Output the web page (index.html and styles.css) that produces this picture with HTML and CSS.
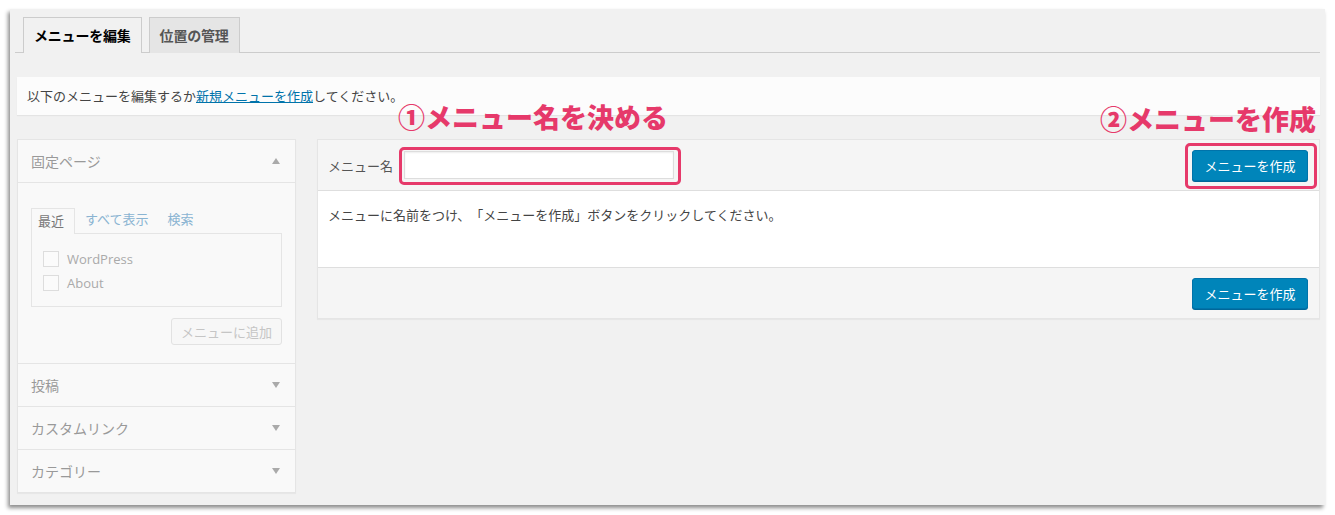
FILE: index.html
```html
<!DOCTYPE html>
<html lang="ja">
<head>
<meta charset="utf-8">
<title>メニュー</title>
<link rel="stylesheet" href="styles.css">
</head>
<body>
<div class="frame">
  <div class="tabs">
    <div class="tab active">メニューを編集</div>
    <div class="tab">位置の管理</div>
  </div>
  <div class="notice">以下のメニューを編集するか<a href="#">新規メニューを作成</a>してください。</div>
  <div class="columns">
    <div class="side">
      <div class="acc-head open"><span>固定ページ</span><span class="arrow up"></span></div>
      <div class="acc-body">
        <div class="mini-tabs">
          <span class="mtab active">最近</span>
          <span class="mtab link">すべて表示</span>
          <span class="mtab link second">検索</span>
        </div>
        <div class="mini-box">
          <label class="chk"><span class="box"></span>WordPress</label>
          <label class="chk"><span class="box"></span>About</label>
        </div>
        <div class="add-row"><span class="add-btn">メニューに追加</span></div>
      </div>
      <div class="acc-head"><span>投稿</span><span class="arrow"></span></div>
      <div class="acc-head"><span>カスタムリンク</span><span class="arrow"></span></div>
      <div class="acc-head last"><span>カテゴリー</span><span class="arrow"></span></div>
    </div>
    <div class="main">
      <div class="main-head">
        <span class="label">メニュー名</span>
        <span class="input"></span>
        <span class="btn">メニューを作成</span>
      </div>
      <div class="main-body">メニューに名前をつけ、「メニューを作成」ボタンをクリックしてください。</div>
      <div class="main-foot"><span class="btn">メニューを作成</span></div>
    </div>
  </div>
  <div class="note note1">①メニュー名を決める</div>
  <div class="note note2">②メニューを作成</div>
  <div class="mark mark1"></div>
  <div class="mark mark2"></div>
</div>
</body>
</html>
```
FILE: styles.css
```css
html, body {
  margin: 0;
  padding: 0;
  background: #fff;
}
body {
  font-family: "Noto Sans CJK JP", "Open Sans", sans-serif;
  font-size: 13px;
  color: #444;
  height: 515px;
  text-spacing-trim: space-all;
}
.frame {
  position: relative;
  margin: 9px 0 0 10px;
  width: 1315px;
  height: 496px;
  box-sizing: border-box;
  padding: 8px 5px 0 5px;
  background: #f1f1f1;
  box-shadow: -2px 3px 4px rgba(0,0,0,0.45);
}
.tabs {
  display: flex;
  gap: 7px;
  height: 35px;
  padding-left: 8px;
  border-bottom: 1px solid #ccc;
}
.tab {
  box-sizing: border-box;
  height: 36px;
  padding: 0 10px;
  border: 1px solid #ccc;
  border-bottom: none;
  background: #e5e5e5;
  color: #555;
  font-weight: 700;
  font-size: 14px;
  line-height: 34px;
  letter-spacing: -0.2px;
}
.tab.active {
  background: #f1f1f1;
  color: #000;
  position: relative;
  z-index: 1;
}
.notice {
  margin: 24px 0 0 2px;
  height: 38px;
  box-sizing: border-box;
  padding: 0 10px;
  background: #fcfcfc;
  box-shadow: 0 1px 1px rgba(0,0,0,0.05);
  line-height: 38px;
  font-size: 13px;
  color: #444;
}
.notice a {
  color: #0073aa;
  text-decoration: underline;
}
.columns {
  display: flex;
  gap: 21px;
  margin: 24px 0 0 2px;
  align-items: flex-start;
}
.side {
  width: 279px;
  box-sizing: border-box;
  border: 1px solid #e5e5e5;
  background: #f9f9f9;
  box-shadow: 0 1px 1px rgba(0,0,0,0.04);
}
.acc-head {
  display: flex;
  justify-content: space-between;
  align-items: center;
  height: 42px;
  padding: 0 13px 0 13px;
  border-bottom: 1px solid #e5e5e5;
  color: #999;
  font-size: 14px;
}
.acc-head.last {
  border-bottom: none;
}
.arrow {
  width: 0;
  height: 0;
  border-left: 4px solid transparent;
  border-right: 4px solid transparent;
  border-top: 6px solid #aaa;
  margin-right: 2px;
}
.arrow.up {
  border-top: none;
  border-bottom: 6px solid #aaa;
}
.acc-body {
  padding: 24px 13px 18px 13px;
  border-bottom: 1px solid #e5e5e5;
}
.mini-tabs {
  display: flex;
  height: 26px;
  align-items: stretch;
}
.mtab {
  font-size: 13px;
  line-height: 24px;
}
.mtab.active {
  box-sizing: border-box;
  width: 44px;
  padding-left: 6px;
  border: 1px solid #e5e5e5;
  border-bottom: none;
  background: #f9f9f9;
  color: #777;
  position: relative;
  top: 1px;
  height: 26px;
}
.mtab.link {
  color: #8ab4d2;
  margin-left: 10px;
}
.mtab.link.second {
  margin-left: 19px;
}
.mini-box {
  height: 74px;
  box-sizing: border-box;
  border: 1px solid #e5e5e5;
  padding: 13px 0 0 11px;
}
.chk {
  display: flex;
  align-items: center;
  height: 24px;
  color: #aaa;
  font-family: "Open Sans", "Noto Sans CJK JP", sans-serif;
  font-size: 13px;
}
.box {
  width: 14px;
  height: 14px;
  border: 1px solid #ddd;
  background: #fbfbfb;
  margin-right: 8px;
}
.add-row {
  display: flex;
  justify-content: flex-end;
  margin-top: 11px;
}
.add-btn {
  box-sizing: border-box;
  width: 111px;
  height: 27px;
  border: 1px solid #e2e2e2;
  border-radius: 3px;
  background: #f7f7f7;
  color: #c5c5c5;
  text-align: center;
  line-height: 25px;
  font-size: 13px;
}
.main {
  flex: 1;
  box-sizing: border-box;
  border: 1px solid #e5e5e5;
  background: #fff;
  box-shadow: 0 1px 1px rgba(0,0,0,0.04);
}
.main-head {
  display: flex;
  align-items: center;
  height: 50px;
  padding: 0 11px 0 10px;
  background: #f5f5f5;
  border-bottom: 1px solid #dedede;
}
.label {
  color: #555;
  font-size: 13px;
  margin-right: 11px;
}
.input {
  box-sizing: border-box;
  width: 270px;
  height: 28px;
  border: 1px solid #ddd;
  background: #fff;
  box-shadow: inset 0 1px 2px rgba(0,0,0,0.07);
}
.btn {
  margin-left: auto;
  box-sizing: border-box;
  width: 116px;
  height: 31px;
  border: 1px solid #0073aa;
  border-radius: 3px;
  background: #0085ba;
  box-shadow: 0 1px 0 #006799;
  color: #fff;
  text-align: center;
  line-height: 29px;
  font-size: 13px;
}
.main-body {
  height: 76px;
  padding: 13px 10px 0 10px;
  box-sizing: border-box;
  color: #444;
  font-size: 13px;
  line-height: 22px;
}
.main-foot {
  display: flex;
  align-items: center;
  height: 50px;
  padding: 0 11px 0 10px;
  background: #f5f5f5;
  border-top: 1px solid #dedede;
}
.note {
  position: absolute;
  color: #e6396a;
  font-weight: 900;
  font-size: 27px;
  line-height: 36px;
  white-space: nowrap;
}
.note1 {
  left: 388px;
  top: 90px;
}
.note2 {
  left: 1090px;
  top: 92px;
}
.mark {
  position: absolute;
  box-sizing: border-box;
  border: 3px solid #e6396a;
  border-radius: 5px;
}
.mark1 {
  left: 389px;
  top: 138px;
  width: 282px;
  height: 38px;
}
.mark2 {
  left: 1175px;
  top: 134px;
  width: 132px;
  height: 46px;
}
```
